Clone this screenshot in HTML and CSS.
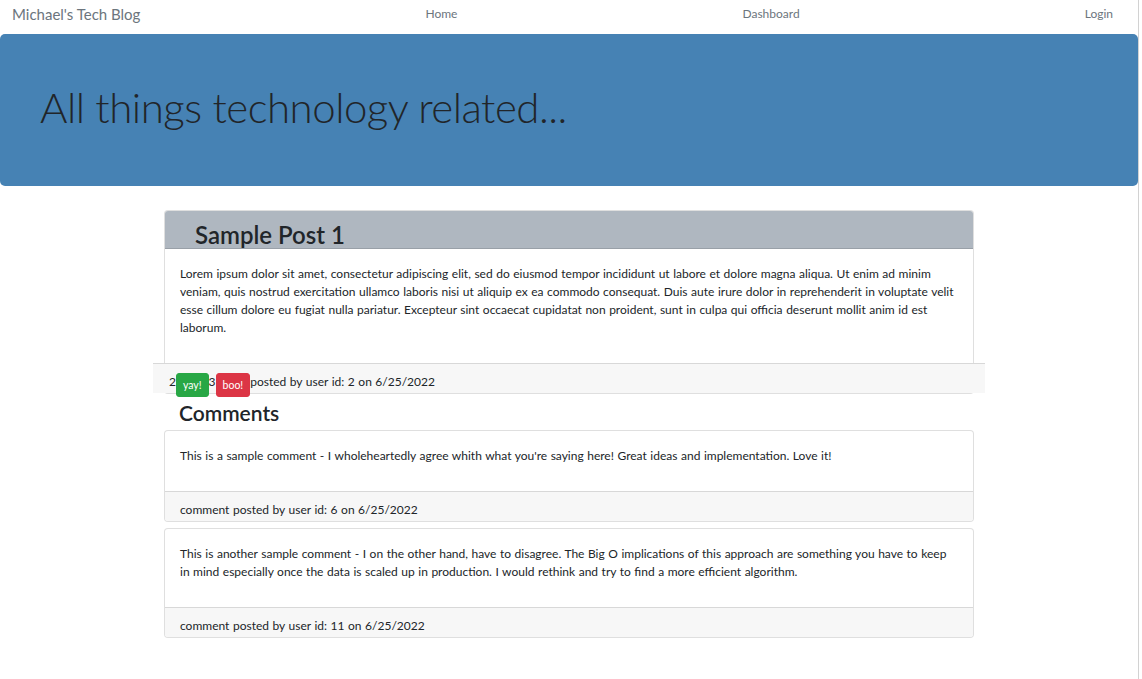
FILE: index.html
```html
<!DOCTYPE html>
<html lang="en">
<head>
<meta charset="utf-8">
<title>Michael's Tech Blog</title>
<link rel="stylesheet" href="styles.css">
</head>
<body>
<div class="page">
  <nav class="navbar">
    <a class="brand" href="#">Michael's Tech Blog</a>
    <a class="nav-link" href="#">Home</a>
    <a class="nav-link" href="#">Dashboard</a>
    <a class="nav-link" href="#">Login</a>
  </nav>
  <header class="jumbotron">
    <h1 class="display">All things technology related...</h1>
  </header>
  <main class="container">
    <article class="card post">
      <div class="card-header">
        <h2 class="post-title">Sample Post 1</h2>
      </div>
      <div class="card-body">
        <p>Lorem ipsum dolor sit amet, consectetur adipiscing elit, sed do eiusmod tempor incididunt ut labore et dolore magna aliqua. Ut enim ad minim veniam, quis nostrud exercitation ullamco laboris nisi ut aliquip ex ea commodo consequat. Duis aute irure dolor in reprehenderit in voluptate velit esse cillum dolore eu fugiat nulla pariatur. Excepteur sint occaecat cupidatat non proident, sunt in culpa qui officia deserunt mollit anim id est laborum.</p>
      </div>
      <div class="post-footer">
        <span>2</span><button class="btn btn-yay" type="button">yay!</button><span>3</span><button class="btn btn-boo" type="button">boo!</button><span>posted by user id: 2 on 6/25/2022</span>
      </div>
    </article>
    <h3 class="comments-title">Comments</h3>
    <div class="card comment">
      <div class="card-body">
        <p>This is a sample comment - I wholeheartedly agree whith what you're saying here! Great ideas and implementation. Love it!</p>
      </div>
      <div class="card-footer">comment posted by user id: 6 on 6/25/2022</div>
    </div>
    <div class="card comment">
      <div class="card-body">
        <p>This is another sample comment - I on the other hand, have to disagree. The Big O implications of this approach are something you have to keep in mind especially once the data is scaled up in production. I would rethink and try to find a more efficient algorithm.</p>
      </div>
      <div class="card-footer">comment posted by user id: 11 on 6/25/2022</div>
    </div>
  </main>
</div>
</body>
</html>
```

FILE: styles.css
```css
* { box-sizing: border-box; }

html, body {
  margin: 0;
  padding: 0;
  background: #ffffff;
}

body {
  font-family: "Lato", "Open Sans", sans-serif;
  font-size: 12px;
  line-height: 18px;
  word-spacing: 0.47px;
  color: #212529;
}

.page {
  width: 1139px;
  min-height: 679px;
  border-right: 1px solid #d2d2d2;
}

.navbar {
  display: flex;
  justify-content: space-between;
  align-items: flex-start;
  height: 34px;
  padding: 4px 25px 0 12px;
  line-height: 20px;
  word-spacing: 0;
}

.brand {
  font-size: 15px;
  color: #6c757d;
  text-decoration: none;
}

.nav-link {
  font-size: 12px;
  color: #6c757d;
  text-decoration: none;
}

.jumbotron {
  background: #4682b4;
  border-radius: 5px;
  width: 1138px;
  padding: 48px 40px;
}

.display {
  margin: 0 0 6px;
  font-size: 42px;
  line-height: 50px;
  font-weight: 300;
  letter-spacing: -0.5px;
  word-spacing: 0;
  color: #212529;
}

.container {
  width: 810px;
  margin: 24px 0 0 164px;
}

.card {
  border: 1px solid rgba(0, 0, 0, 0.125);
  border-radius: 4px;
  background: #ffffff;
}

.card-header {
  background: #afb7c0;
  border-bottom: 1px solid rgba(0, 0, 0, 0.125);
  border-radius: 3px 3px 0 0;
  padding: 10px 15px 0 30px;
}

.post-title {
  margin: 0;
  font-size: 24px;
  line-height: 27px;
  font-weight: 600;
  word-spacing: 0;
}

.card-body {
  padding: 16px 15px 14px;
}

.card-body p {
  margin: 0 0 12px;
}

.post-footer {
  display: flex;
  align-items: flex-start;
  height: 30px;
  margin: 0 -12px;
  padding: 9px 16px 0;
  background: #f7f7f7;
  border-top: 1px solid rgba(0, 0, 0, 0.125);
  white-space: pre;
}

.btn {
  font-family: inherit;
  font-size: 10.5px;
  line-height: 16px;
  height: 24px;
  padding: 3px 6px;
  border: 1px solid transparent;
  border-radius: 3px;
  color: #ffffff;
  cursor: pointer;
}

.btn-yay {
  background: #28a745;
  border-color: #28a745;
}

.btn-boo {
  background: #dc3545;
  border-color: #dc3545;
}

.comments-title {
  margin: 6px 0 5px;
  padding-left: 15px;
  font-size: 21px;
  line-height: 25px;
  font-weight: 600;
  word-spacing: 0;
}

.comment {
  margin-bottom: 6px;
}

.card-footer {
  height: 30px;
  padding: 9px 15px 0;
  background: #f7f7f7;
  border-top: 1px solid rgba(0, 0, 0, 0.125);
  border-radius: 0 0 3px 3px;
}
```
